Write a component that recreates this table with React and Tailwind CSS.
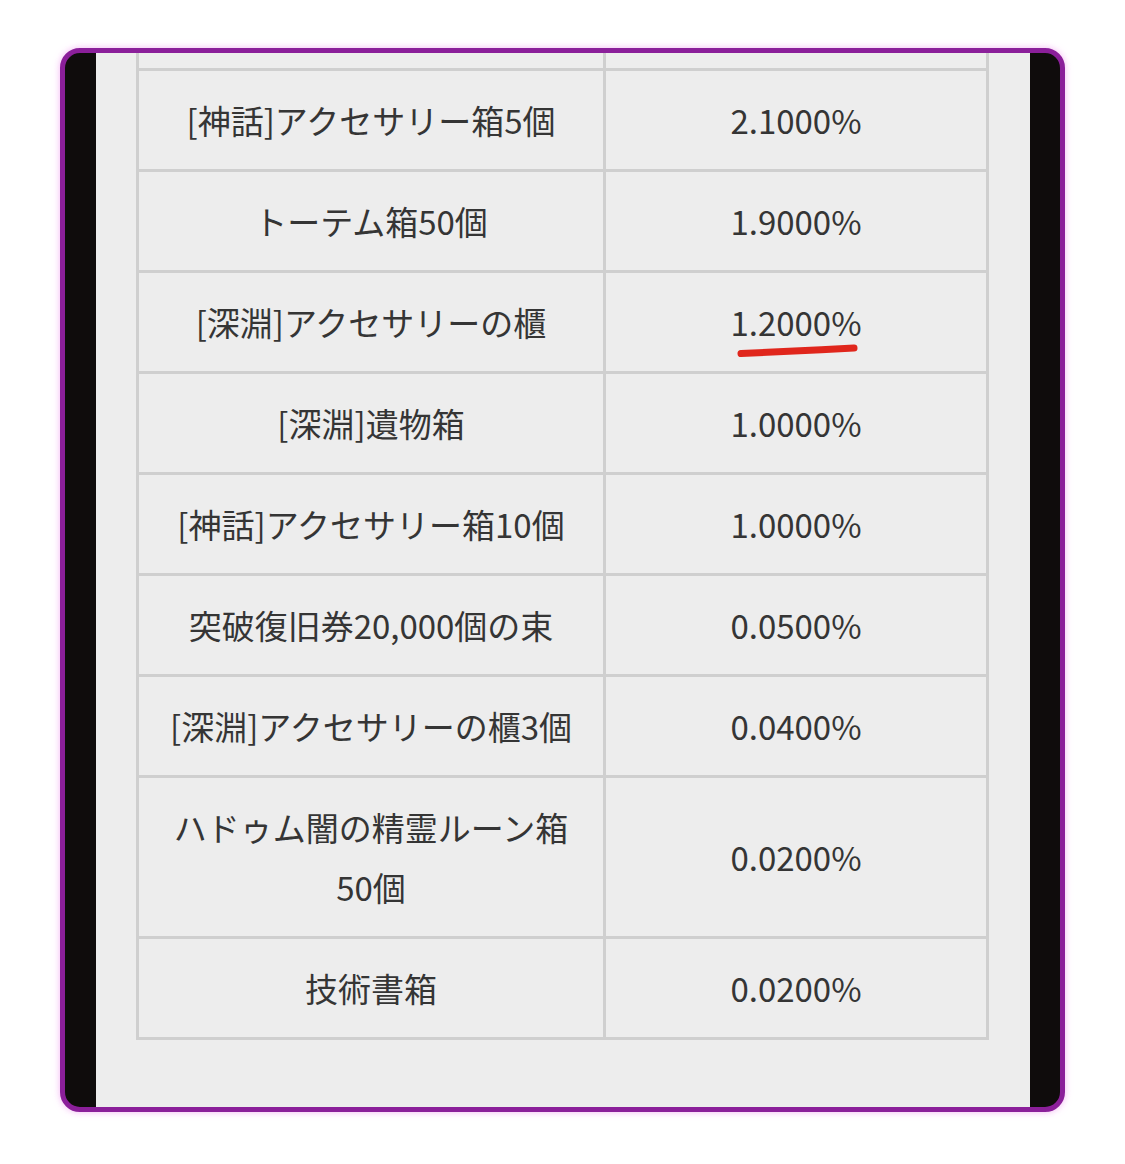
import React from 'react';

const rows = [
  { name: '[神話]アクセサリー箱5個', rate: '2.1000%' },
  { name: 'トーテム箱50個', rate: '1.9000%' },
  { name: '[深淵]アクセサリーの櫃', rate: '1.2000%', marked: true },
  { name: '[深淵]遺物箱', rate: '1.0000%' },
  { name: '[神話]アクセサリー箱10個', rate: '1.0000%' },
  { name: '突破復旧券20,000個の束', rate: '0.0500%' },
  { name: '[深淵]アクセサリーの櫃3個', rate: '0.0400%' },
  { name: 'ハドゥム闇の精霊ルーン箱50個', rate: '0.0200%' },
  { name: '技術書箱', rate: '0.0200%' },
];

const cell = 'border-[3px] border-[#cfcfcf] px-[26px] py-[19px] text-center align-middle leading-[60px]';

const RedMark = () => (
  <svg
    className="absolute left-[6px] top-[50px]"
    width="124"
    height="16"
    viewBox="0 0 124 16"
    fill="none"
  >
    <path
      d="M5 11.5 C 40 10, 80 8, 118 6"
      stroke="#e0261c"
      strokeWidth="7"
      strokeLinecap="round"
    />
  </svg>
);

const App = () => {
  return (
    <div className="min-h-screen w-[1125px] h-[1164px] bg-white pt-[48px] pl-[60px]">
      <div
        className="w-[1005px] h-[1064px] rounded-[20px] border-[5px] border-[#8b1f9a] bg-[#0f0c0c] flex pl-[31px] pr-[30px] shadow-[0_0_7px_rgba(235,120,235,0.55)] overflow-hidden"
        style={{ fontFamily: '"Noto Sans CJK JP", "Noto Sans", sans-serif' }}
      >
        <div className="flex-1 bg-[#ededed] overflow-hidden pl-[40px]">
          <table className="w-[853px] border-collapse text-[33px] text-[#353535]">
            <tbody>
              <tr>
                <td className="w-[467px] h-[16px] p-0 border-[3px] border-t-0 border-[#cfcfcf]"></td>
                <td className="h-[16px] p-0 border-[3px] border-t-0 border-[#cfcfcf]"></td>
              </tr>
              {rows.map((r, i) => (
                <tr key={i}>
                  <td className={cell}>{r.name}</td>
                  <td className={cell}>
                    <span className="relative inline-block">
                      {r.rate}
                      {r.marked && <RedMark />}
                    </span>
                  </td>
                </tr>
              ))}
            </tbody>
          </table>
        </div>
      </div>
    </div>
  );
};

export default App;
